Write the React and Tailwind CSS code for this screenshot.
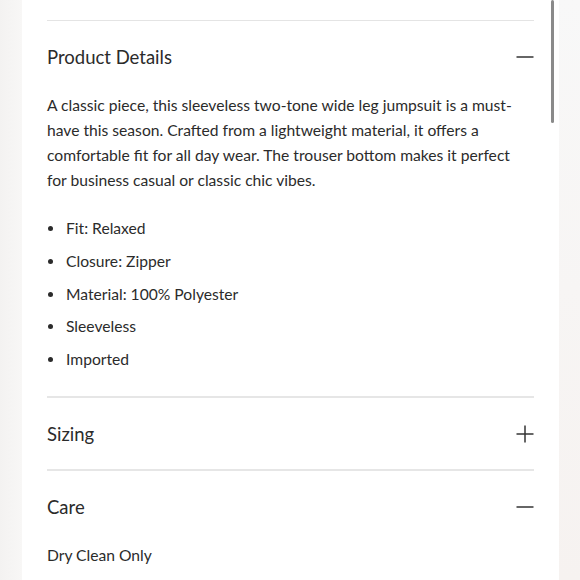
import React from "react";

const bullets = [
  "Fit: Relaxed",
  "Closure: Zipper",
  "Material: 100% Polyester",
  "Sleeveless",
  "Imported",
];

function Minus() {
  return (
    <svg width="18" height="18" viewBox="0 0 18 18" className="shrink-0">
      <line x1="0.5" y1="9" x2="17.5" y2="9" stroke="#333" strokeWidth="1.5" />
    </svg>
  );
}

function Plus() {
  return (
    <svg width="18" height="18" viewBox="0 0 18 18" className="shrink-0">
      <line x1="0.5" y1="9" x2="17.5" y2="9" stroke="#333" strokeWidth="1.5" />
      <line x1="9" y1="0.5" x2="9" y2="17.5" stroke="#333" strokeWidth="1.5" />
    </svg>
  );
}

function Section({ title, open, h = "h-[72px]", children }) {
  return (
    <div>
      <div className={`${h} flex items-center justify-between`}>
        <h2 className="text-[18.5px] text-[#2b2b2b] pt-[2px]">{title}</h2>
        {open ? <Minus /> : <Plus />}
      </div>
      {children}
    </div>
  );
}

export default function App() {
  return (
    <div
      className="flex w-full h-[580px] bg-[#f6f5f4] overflow-hidden text-[#2b2b2b]"
      style={{ fontFamily: "Lato, 'Noto Sans', sans-serif" }}
    >
      <div className="w-[22px] shrink-0 bg-gradient-to-r from-[#f3f2f1] to-[#f8f7f6]" />
      <div className="w-[537px] shrink-0 bg-white relative px-[25px] pt-[20px]">
        <div className="absolute left-[529px] top-0 w-[3px] h-[123px] rounded-full bg-[#8a8a8a]" />
        <div className="border-t border-[#e4e4e4]" />
        <Section title="Product Details" open>
          <p className="text-[15.65px] leading-[25px] pr-[12px]">
            A classic piece, this sleeveless two-tone wide leg jumpsuit is a must-have this season. Crafted from a
            lightweight material, it offers a comfortable fit for all day wear. The trouser bottom makes it perfect
            for business casual or classic chic vibes.
          </p>
          <ul className="mt-[23px] flex flex-col gap-[7.75px] pb-[24px]">
            {bullets.map((b) => (
              <li key={b} className="flex items-center text-[15.65px] leading-[25px]">
                <span className="w-[5px] h-[5px] rounded-full bg-[#2b2b2b] ml-[1px] mr-[13px]" />
                {b}
              </li>
            ))}
          </ul>
        </Section>
        <div className="border-t-2 border-[#e6e6e6]" />
        <Section title="Sizing" h="h-[71px]" />
        <div className="border-t-2 border-[#e6e6e6]" />
        <Section title="Care" open>
          <p className="text-[15.65px] leading-[25px]">Dry Clean Only</p>
        </Section>
      </div>
      <div className="flex-1 bg-gradient-to-b from-[#f8f8f8] to-[#f6f2f0]" />
    </div>
  );
}
